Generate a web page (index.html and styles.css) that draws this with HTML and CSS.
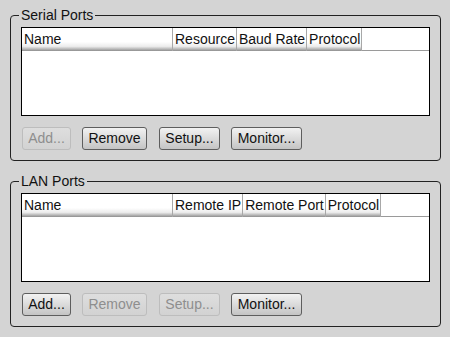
FILE: index.html
```html
<!DOCTYPE html>
<html>
<head>
<meta charset="utf-8">
<link rel="stylesheet" href="styles.css">
</head>
<body>
<fieldset class="group">
  <legend class="group-title">Serial Ports</legend>
  <div class="table">
    <div class="thead">
      <div class="th th-name">Name</div>
      <div class="th">Resource</div>
      <div class="th">Baud Rate</div>
      <div class="th">Protocol</div>
      <div class="th-fill"></div>
    </div>
  </div>
  <div class="buttons">
    <button class="btn btn-add" disabled>Add...</button>
    <button class="btn btn-remove">Remove</button>
    <button class="btn btn-setup">Setup...</button>
    <button class="btn btn-monitor">Monitor...</button>
  </div>
</fieldset>
<fieldset class="group group-second">
  <legend class="group-title">LAN Ports</legend>
  <div class="table">
    <div class="thead">
      <div class="th th-name">Name</div>
      <div class="th">Remote IP</div>
      <div class="th">Remote Port</div>
      <div class="th">Protocol</div>
      <div class="th-fill"></div>
    </div>
  </div>
  <div class="buttons">
    <button class="btn btn-add">Add...</button>
    <button class="btn btn-remove" disabled>Remove</button>
    <button class="btn btn-setup" disabled>Setup...</button>
    <button class="btn btn-monitor">Monitor...</button>
  </div>
</fieldset>
</body>
</html>
```
FILE: styles.css
```css
html, body {
  margin: 0;
  padding: 0;
}
body {
  background: #d4d4d4;
  font-family: "Liberation Sans", Arial, sans-serif;
  font-size: 14px;
  color: #111;
  width: 450px;
  height: 337px;
  overflow: hidden;
}
.group {
  margin: 7px 9px 0 10px;
  padding: 4px 10px 10px 10px;
  border: 1px solid #222;
  border-radius: 4px;
  min-width: 0;
}
.group-second {
  margin-top: 12px;
}
.group-title {
  padding: 0 2px;
  margin-left: -2px;
  line-height: 16px;
  height: 16px;
}
.table {
  height: 87px;
  background: #fff;
  border: 1px solid #000;
}
.thead {
  display: flex;
  height: 23px;
}
.th {
  padding: 0 1px 0 2px;
  line-height: 22px;
  white-space: nowrap;
  border-right: 1px solid #a8a8a8;
  background: linear-gradient(#ffffff 0, #ffffff 60%, #ececec 80%, #c8c8c8 88%, #8e8e8e 100%);
}
.th-name {
  width: 147px;
}
.th-fill {
  flex: 1;
  border-bottom: 1px solid #9a9a9a;
  height: 22px;
}
.buttons {
  display: flex;
  gap: 11px;
  margin-top: 11px;
  padding-left: 1px;
}
.btn {
  font-family: "Liberation Sans", Arial, sans-serif;
  font-size: 14px;
  color: #111;
  height: 23px;
  line-height: 21px;
  padding: 0;
  text-align: center;
  border: 1px solid #5e5e5e;
  border-radius: 3px;
  background: linear-gradient(#f2f2f2, #c4c4c4);
  margin: 0;
}
.btn-add { width: 49px; }
.btn-remove { width: 65px; margin-right: 1px; }
.btn-setup { width: 61px; }
.btn-monitor { width: 71px; }
.btn:disabled {
  color: #8e8e8e;
  border-color: #bdbdbd;
  background: linear-gradient(#dedede, #d2d2d2);
}
```
